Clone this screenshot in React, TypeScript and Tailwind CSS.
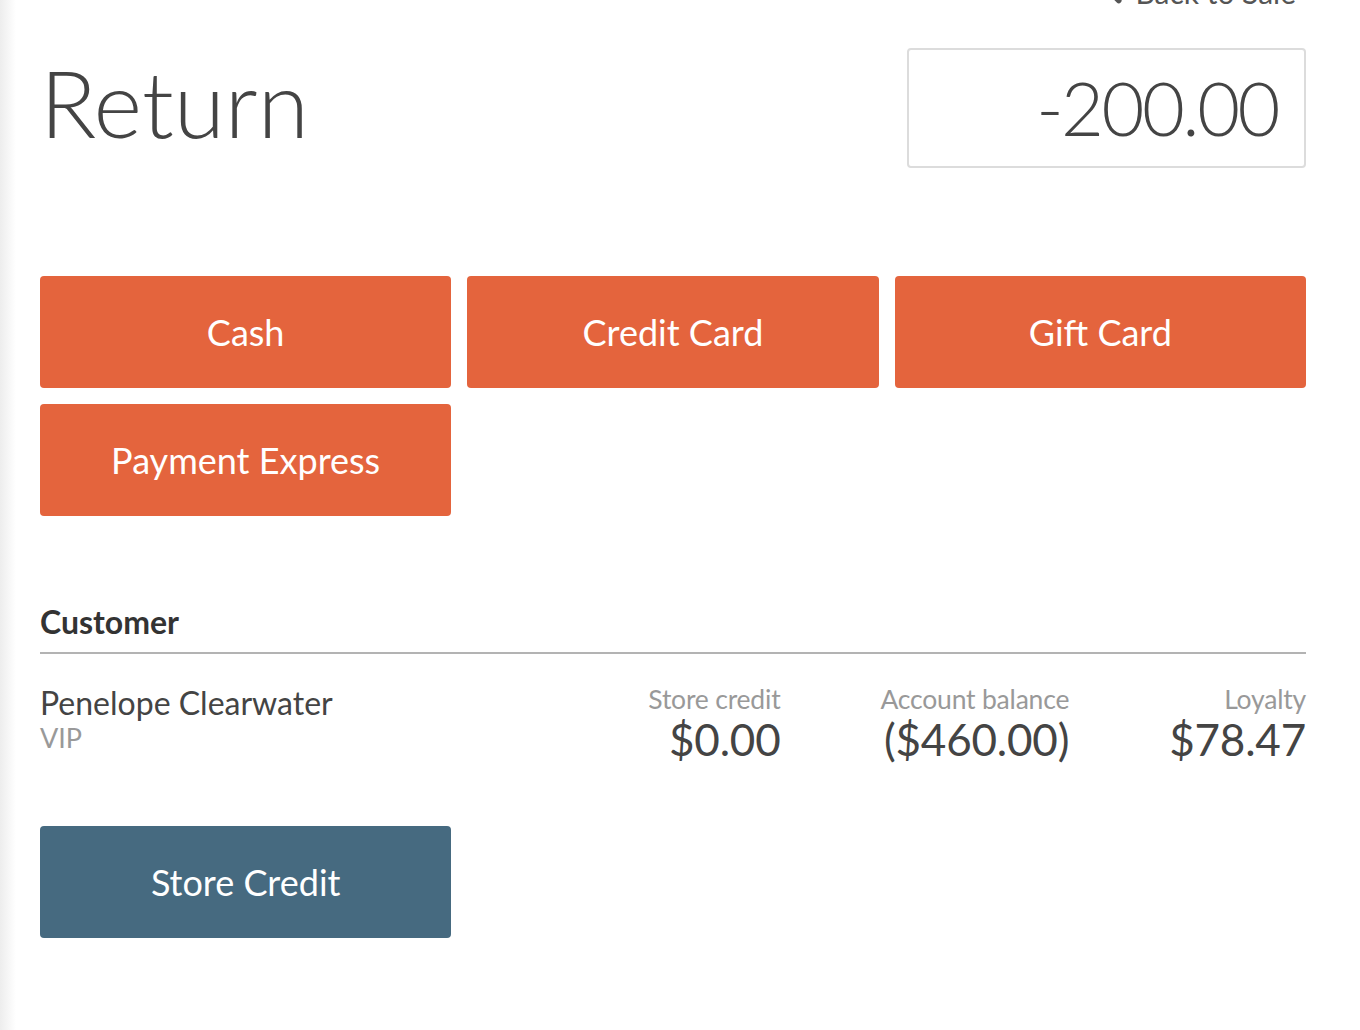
import React from "react";
import { ChevronLeft } from "lucide-react";

const methods = ["Cash", "Credit Card", "Gift Card", "Payment Express"];

const stats = [
  { label: "Store credit", value: "$0.00" },
  { label: "Account balance", value: "($460.00)" },
  { label: "Loyalty", value: "$78.47" },
];

export default function App() {
  return (
    <div className="min-h-screen bg-white flex overflow-hidden font-['Lato','Liberation_Sans',sans-serif] text-[#444]">
      <div className="w-[16px] shrink-0 bg-gradient-to-r from-[#ededed] to-white" />
      <div className="flex-1 pl-[24px] pr-[54px]">
        <div className="flex justify-end items-center -mt-[23px] pr-[10px] h-[30px] text-[30px] leading-[30px] text-[#555]">
          <ChevronLeft size={38} strokeWidth={3.5} className="mr-[2px] -mt-[2px]" />
          <span>Back to Sale</span>
        </div>

        <div className="flex justify-between items-start mt-[41px]">
          <h1 className="mt-[8px] text-[93px] leading-[93px] font-light text-[#444]">Return</h1>
          <div className="w-[399px] h-[120px] border-2 border-[#dcdcdc] rounded-[4px] flex items-center justify-end pr-[26px]">
            <span className="text-[74px] leading-[74px] font-light tracking-[-2.5px] text-[#444]">-200.00</span>
          </div>
        </div>

        <div className="grid grid-cols-3 gap-4 mt-[108px]">
          {methods.map((m) => (
            <button
              key={m}
              className="h-[112px] rounded-[4px] bg-[#e4643d] text-white text-[36px] flex items-center justify-center"
            >
              {m}
            </button>
          ))}
        </div>

        <h2 className="mt-[91px] text-[32px] leading-[30px] font-bold text-[#333]">Customer</h2>
        <div className="mt-[15px] h-[2px] bg-[#b3b3b3]" />

        <div className="flex justify-between items-start mt-[30px]">
          <div>
            <div className="text-[32px] leading-[38px] text-[#444]">Penelope Clearwater</div>
            <div className="text-[27px] leading-[30px] mt-[1px] text-[#999]">VIP</div>
          </div>
          <div className="flex gap-[100px] tracking-[-0.2px]">
            {stats.map((s) => (
              <div key={s.label} className="text-right">
                <div className="text-[26.5px] leading-[30px] text-[#999]">{s.label}</div>
                <div className="text-[44px] leading-[50px] text-[#444]">{s.value}</div>
              </div>
            ))}
          </div>
        </div>

        <div className="grid grid-cols-3 gap-4 mt-[62px]">
          <button className="h-[112px] rounded-[4px] bg-[#466a80] text-white text-[36px] flex items-center justify-center">
            Store Credit
          </button>
        </div>
      </div>
    </div>
  );
}
